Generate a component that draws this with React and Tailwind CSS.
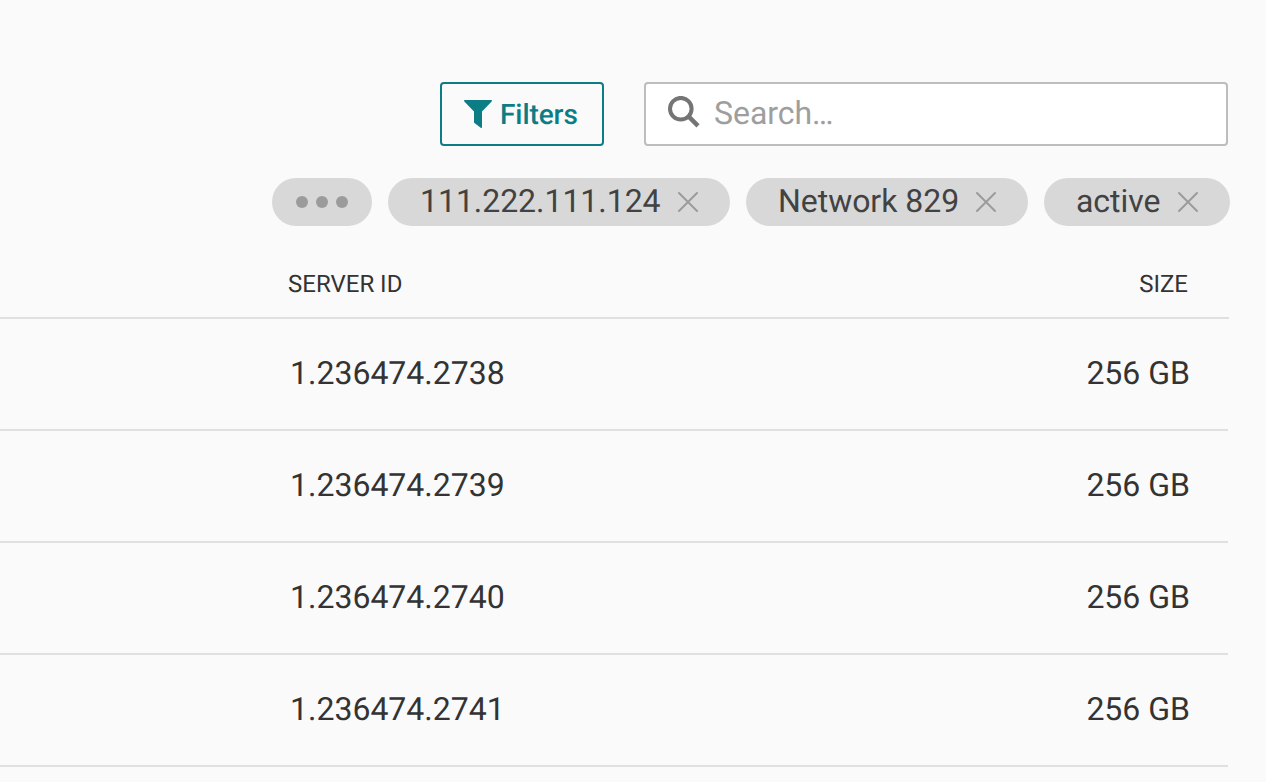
const rows = ['1.236474.2738', '1.236474.2739', '1.236474.2740', '1.236474.2741'];

function FunnelIcon() {
  return (
    <svg width="28" height="28" viewBox="0 0 28 28" fill="currentColor" className="shrink-0">
      <path d="M.8 0h26.4c.8 0 1 .9.5 1.500L18 11.600v15.600c0 .7-.7 1-1.300.6l-6.200-4.700a1.200 1.200 0 0 1-.5-1V11.600L.3 1.500C-.2.9 0 0 .8 0Z" />
    </svg>
  );
}

function SearchIcon() {
  return (
    <svg width="32" height="32" viewBox="0 0 32 32" fill="none" stroke="#757575" className="shrink-0">
      <circle cx="12.800" cy="12.700" r="10.800" strokeWidth="4" />
      <path d="M20.500 20.400 30 29.900" strokeWidth="4.400" />
    </svg>
  );
}

function Chip({ label, className }) {
  return (
    <div className={`flex h-12 items-center justify-between rounded-full bg-[#d8d8d8] pl-8 pr-[31px] ${className}`}>
      <span className="-mt-[2px] whitespace-nowrap text-[32px] leading-[48px] tracking-[-0.04px] text-[#424242]">{label}</span>
      <svg width="22" height="22" viewBox="0 0 22 22" fill="none" stroke="#9b9b9b" strokeWidth="2" strokeLinecap="round" className="shrink-0">
        <path d="m2 2 18 18M20 2 2 20" />
      </svg>
    </div>
  );
}

export default function App() {
  return (
    <div className="h-[782px] w-[1266px] overflow-hidden bg-[#fafafa] pt-[82px] font-[Roboto,sans-serif] text-[#333333] antialiased [text-rendering:geometricPrecision]">
      <div className="flex justify-end gap-10 pr-[38px]">
        <button className="flex h-16 w-[164px] items-center gap-2 rounded border-2 border-[#0d7d85] pl-[22px] text-[28px] font-medium text-[#0d7d85] [text-rendering:geometricPrecision]">
          <FunnelIcon />
          <span className="pt-[2px] leading-8 tracking-[-0.08px]">Filters</span>
        </button>
        <div className="flex h-16 w-[584px] items-center gap-[14px] rounded border-2 border-[#bdbdbd] bg-white pl-[22px]">
          <div className="-mt-1">
            <SearchIcon />
          </div>
          <span className="-mt-[2px] text-[32px] leading-10 tracking-[-0.04px] text-[#9e9e9e]">Search…</span>
        </div>
      </div>
      <div className="mt-8 flex justify-end gap-4 pr-9">
        <div className="flex h-12 w-[100px] items-center justify-center gap-2 rounded-full bg-[#d8d8d8]">
          <span className="size-3 rounded-full bg-[#9b9b9b]" />
          <span className="size-3 rounded-full bg-[#9b9b9b]" />
          <span className="size-3 rounded-full bg-[#9b9b9b]" />
        </div>
        <Chip label="111.222.111.124" className="w-[342px]" />
        <Chip label="Network 829" className="w-[282px]" />
        <Chip label="active" className="w-[186px]" />
      </div>
      <div className="flex h-[93px] w-[1229px] items-center justify-between border-b-2 border-[#e0e0e0] pl-[288px] pr-[41px] pt-[25px] text-[24px] leading-8">
        <span>SERVER ID</span>
        <span>SIZE</span>
      </div>
      {rows.map((id) => (
        <div key={id} className="flex h-28 w-[1228px] items-center justify-between border-b-2 border-[#e0e0e0] pb-[2px] pl-[290px] pr-[38px] text-[32px] leading-10">
          <span>{id}</span>
          <span>256 GB</span>
        </div>
      ))}
    </div>
  );
}
